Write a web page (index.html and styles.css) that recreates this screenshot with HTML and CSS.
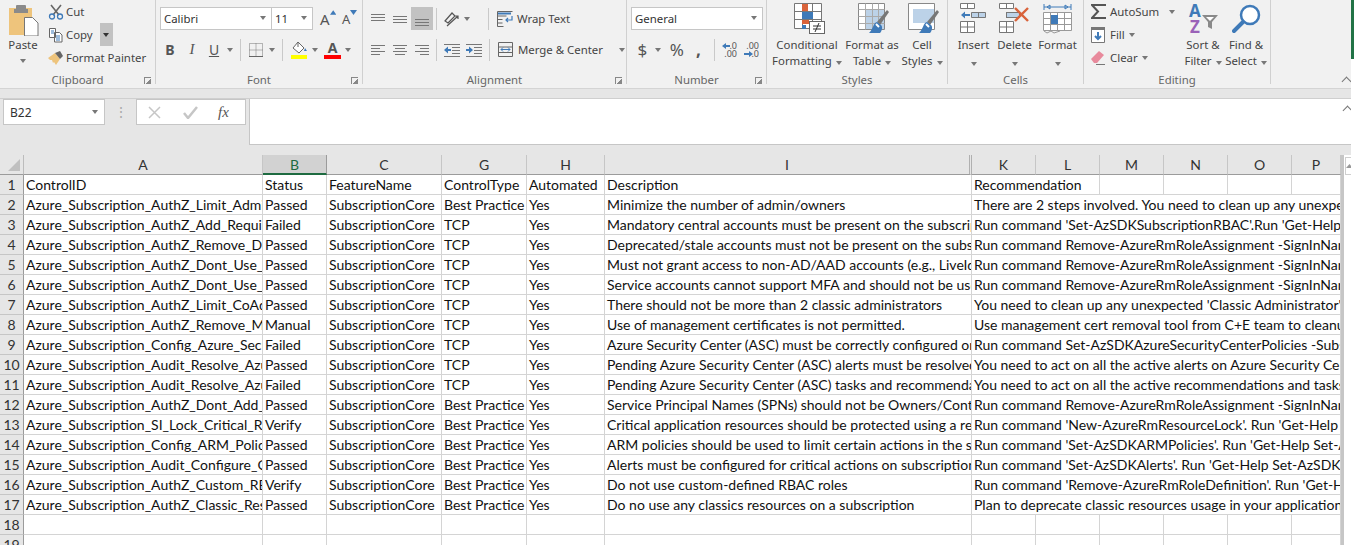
FILE: index.html
```html
<!DOCTYPE html>
<html lang="en">
<head>
<meta charset="utf-8">
<title>Excel</title>
<link rel="stylesheet" href="styles.css">
</head>
<body>
<div class="app">
  <div class="ribbon">
    <section class="group g-clip">
      <div class="gbody clip-body">
        <div class="paste">
          <svg width="32" height="32" viewBox="0 0 32 32"><rect x="1" y="4" width="23" height="27" fill="#eec47c"/><rect x="8" y="1" width="10" height="7" rx="1" fill="#8a8a8a"/><rect x="6" y="5" width="14" height="4" fill="#8a8a8a"/><path d="M16.500 13.500h8l5.500 5.500v13h-13.500z" fill="#fff" stroke="#777"/></svg>
          <span>Paste</span>
          <i class="caret"></i>
        </div>
        <div class="clip-list">
          <div class="item"><svg width="16" height="16" viewBox="0 0 16 16"><path d="M3 1l8 10M13 1l-8 10" stroke="#666" stroke-width="1.600" fill="none"/><circle cx="4" cy="12.500" r="2.500" fill="none" stroke="#3f7ab8" stroke-width="1.300"/><circle cx="12" cy="12.500" r="2.500" fill="none" stroke="#3f7ab8" stroke-width="1.300"/></svg><span>Cut</span></div>
          <div class="item"><svg width="16" height="16" viewBox="0 0 16 16"><path d="M1.500 1.500h6v9h-6zM6.500 5.500h5l2.500 2.500v7h-7.500z" fill="#fff" stroke="#666"/><path d="M3 4h3M3 6h3M8 9h4M8 11h4M8 13h4" stroke="#3f7ab8"/></svg><span>Copy</span><b class="split"><i class="caret dark"></i></b></div>
          <div class="item"><svg width="16" height="16" viewBox="0 0 16 16"><path d="M0 8l7-5 5 6-4 6-2-3-1 1-1-3-2 0z" fill="#eec47c"/><path d="M7 3l5 6 3-3-3-5z" fill="#666"/></svg><span>Format Painter</span></div>
        </div>
      </div>
      <footer class="glabel">Clipboard<i class="launch"></i></footer>
    </section>

    <section class="group g-font">
      <div class="gbody stack">
        <div class="line first">
          <div class="select font"><span>Calibri</span><i class="caret"></i></div>
          <div class="select size"><span>11</span><i class="caret"></i></div>
          <span class="grow">A<svg width="7" height="5" viewBox="0 0 7 5"><path d="M0 5l3.500-5 3.500 5z" fill="#3f7ab8"/></svg></span>
          <span class="grow small-a">A<svg width="7" height="5" viewBox="0 0 7 5"><path d="M0 0l3.500 5 3.500-5z" fill="#3f7ab8"/></svg></span>
        </div>
        <div class="line second fonttools">
          <b class="tb bold">B</b><i class="tb ital">I</i><u class="tb und">U</u><i class="caret"></i>
          <em class="sep"></em>
          <svg width="14" height="14" viewBox="0 0 14 14"><path d="M.5.500h13v13H.5zM7 .5v13M.5 7h13" fill="none" stroke="#777" stroke-dasharray="1 1"/><path d="M0 13.500h14" stroke="#666"/></svg>
          <i class="caret c-b"></i>
          <em class="sep"></em>
          <svg width="17" height="18" viewBox="0 0 17 18"><path d="M7 1l6 6-5 5-6-5z" fill="#fff" stroke="#666"/><path d="M7 1v5" stroke="#666"/><path d="M14 7l2 3-3 0z" fill="#3f7ab8"/><rect y="14" width="16" height="4" fill="#ff0"/></svg>
          <i class="caret c-f"></i>
          <span class="colora">A</span>
          <i class="caret c-f"></i>
        </div>
      </div>
      <footer class="glabel">Font<i class="launch"></i></footer>
    </section>

    <section class="group g-align">
      <div class="gbody stack">
        <div class="line first">
          <span class="ai"><svg width="14" height="14" viewBox="0 0 14 14"><path d="M0 2.500h14M0 5.500h14M0 8.500h14" stroke="#777"/></svg></span>
          <span class="ai"><svg width="14" height="14" viewBox="0 0 14 14"><path d="M0 4.500h14M0 7.500h14M0 10.500h14" stroke="#777"/></svg></span>
          <span class="ai on"><svg width="14" height="14" viewBox="0 0 14 14"><path d="M0 7.500h14M0 10.500h14M0 13.500h14" stroke="#777"/></svg></span>
          <em class="sep"></em>
          <svg class="orient" width="16" height="16" viewBox="0 0 16 16"><path d="M1 10L8 2l3 3-7 7zM3 15L14 5M11 5h3v3" fill="none" stroke="#555" stroke-width="1.200"/></svg>
          <i class="caret"></i>
          <em class="sep far"></em>
          <div class="item wide"><svg width="16" height="16" viewBox="0 0 16 16"><path d="M.5.500h15M.5 5h9M.5 8.500h5M.5 12h5M.5.500v15h6" fill="none" stroke="#666"/><path d="M1 2.500h13" stroke="#3f7ab8" stroke-width="2"/><path d="M15 5v4H9M11 7l-2 2 2 2" fill="none" stroke="#3f7ab8" stroke-width="1.200"/></svg><span>Wrap Text</span></div>
        </div>
        <div class="line second">
          <span class="ai"><svg width="14" height="14" viewBox="0 0 14 14"><path d="M0 2.500h14M0 5.500h9M0 8.500h14M0 11.500h9" stroke="#777"/></svg></span>
          <span class="ai"><svg width="14" height="14" viewBox="0 0 14 14"><path d="M0 2.500h14M2 5.500h10M0 8.500h14M2 11.500h10" stroke="#777"/></svg></span>
          <span class="ai"><svg width="14" height="14" viewBox="0 0 14 14"><path d="M0 2.500h14M5 5.500h9M0 8.500h14M5 11.500h9" stroke="#777"/></svg></span>
          <em class="sep"></em>
          <svg class="ind" width="16" height="14" viewBox="0 0 16 14"><path d="M0 1.500h16M8 4.500h8M8 7.500h8M8 10.500h8M0 13.500h16" stroke="#777"/><path d="M0 7l4-3.500V6h3v2H4v2.500z" fill="#3f7ab8"/></svg>
          <svg class="ind" width="16" height="14" viewBox="0 0 16 14"><path d="M0 1.500h16M8 4.500h8M8 7.500h8M8 10.500h8M0 13.500h16" stroke="#777"/><path d="M7 7L3 3.500V6H0v2h3v2.500z" fill="#3f7ab8"/></svg>
          <em class="sep far2"></em>
          <div class="item wide"><svg width="16" height="16" viewBox="0 0 16 16"><path d="M.5.500h14v14H.5zM.5 5h14M.5 10.500h14" fill="#f1f1f1" stroke="#666"/><path d="M3 7.500h9" stroke="#3f7ab8"/><path d="M5 5.500l-2 2 2 2M10 5.500l2 2-2 2" fill="none" stroke="#3f7ab8"/></svg><span>Merge &amp; Center</span><i class="caret push"></i></div>
        </div>
      </div>
      <footer class="glabel">Alignment<i class="launch"></i></footer>
    </section>

    <section class="group g-num">
      <div class="gbody stack">
        <div class="line first"><div class="select general"><span>General</span><i class="caret"></i></div></div>
        <div class="line second numtools">
          <span class="sym dollar">$</span><i class="caret"></i>
          <span class="sym pct">%</span><span class="sym comma">,</span>
          <em class="sep"></em>
          <span class="dec"><svg width="15" height="15" viewBox="0 0 15 15"><path d="M0 4l4-3v2h4v2H4v2z" fill="#3f7ab8"/></svg><small class="d1">.0</small><small class="d2">.00</small></span>
          <span class="dec"><svg width="15" height="15" viewBox="0 0 15 15"><path d="M9 12l-4-3v2H0v2h5v2z" fill="#3f7ab8"/></svg><small class="d3">.00</small><small class="d4">.0</small></span>
        </div>
      </div>
      <footer class="glabel">Number<i class="launch"></i></footer>
    </section>

    <section class="group g-styles">
      <div class="gbody bigs">
        <div class="lg cond">
          <svg width="31" height="31" viewBox="0 0 31 31"><path d="M.5.500h27v25H.5zM.5 8.500h27M.5 16.500h27M8.500.500v25M18.500.500v25" fill="#fff" stroke="#777"/><rect x="8" y="1" width="6" height="7" fill="#d9633b"/><rect x="8" y="9" width="11" height="7" fill="#3f7ab8"/><rect x="8" y="17" width="7" height="4" fill="#d9633b"/><rect x="8" y="22" width="4" height="4" fill="#3f7ab8"/><rect x="15.500" y="18.500" width="15" height="12" fill="#fff" stroke="#666"/><path d="M19 23h8M19 26h8M25 20l-4 9" stroke="#333"/></svg>
          <span>Conditional</span><span>Formatting<i class="caret"></i></span>
        </div>
        <div class="lg tbl">
          <svg width="31" height="31" viewBox="0 0 31 31"><path d="M.5.500h26v26H.5z" fill="#fff" stroke="#888"/><rect x="7" y="7" width="19" height="19" fill="#bcd2e8"/><path d="M.5 6.500h26M.5 13.500h26M.5 20.500h26M7.500.500v26M14.500.500v26M20.500.500v26" stroke="#aaa" fill="none"/><path d="M29 7l-10 12 3 3 9-13z" fill="#777"/><path d="M19 19c-4 1-3 6-8 11h11c2-2 3-6 1-8z" fill="#3f7ab8"/><path d="M18 21l3 3" stroke="#fff" stroke-width="2"/></svg>
          <span>Format as</span><span>Table<i class="caret"></i></span>
        </div>
        <div class="lg cst">
          <svg width="31" height="31" viewBox="0 0 31 31"><path d="M.5.500h26v26H.5z" fill="#fff" stroke="#888"/><rect x="5" y="6" width="21" height="14" fill="#bcd2e8"/><path d="M29 7l-10 12 3 3 9-13z" fill="#777"/><path d="M19 19c-4 1-3 6-8 11h11c2-2 3-6 1-8z" fill="#3f7ab8"/><path d="M18 21l3 3" stroke="#fff" stroke-width="2"/></svg>
          <span>Cell</span><span>Styles<i class="caret"></i></span>
        </div>
      </div>
      <footer class="glabel">Styles</footer>
    </section>

    <section class="group g-cells">
      <div class="gbody bigs">
        <div class="lg ins">
          <svg width="27" height="31" viewBox="0 0 27 31"><path d="M.5.500h14v5H.5zM7.500.500v5M.5 18.500h14v11H.5zM.5 24h14M7.500 18.500v11" fill="#fff" stroke="#777"/><path d="M11.500 9.500h14v5h-14zM18.500 9.500v5" fill="#bcd2e8" stroke="#777"/><path d="M1 12l4-3.500V11h5v2H5v2.500z" fill="#3f7ab8"/></svg>
          <span>Insert</span><i class="caret under"></i>
        </div>
        <div class="lg del">
          <svg width="31" height="31" viewBox="0 0 31 31"><path d="M.5.500h14v5H.5zM7.500.500v5M.5 18.500h14v11H.5zM.5 24h14M7.500 18.500v11" fill="#fff" stroke="#777"/><rect x="7.500" y="9.500" width="13" height="5" fill="#bcd2e8" stroke="#777"/><path d="M16 5l13 13M29 5L16 18" stroke="#d9633b" stroke-width="2.400"/></svg>
          <span>Delete</span><i class="caret under"></i>
        </div>
        <div class="lg fmt">
          <svg width="29" height="31" viewBox="0 0 29 31"><path d="M1 4h27M1 1v6M28 1v6M4 4l3-2v4zM25 4l-3-2v4z" fill="none" stroke="#3f7ab8"/><path d="M.5 9.500h28v18H.5zM.5 15.500h28M.5 21.500h28M7.500 9.500v18M14.500 9.500v18M21.500 9.500v18" fill="#fff" stroke="#999"/><rect x="8" y="12" width="7" height="9" fill="#3f7ab8"/><path d="M1 28l3 2 4-2 3 2 6-2" fill="none" stroke="#999"/></svg>
          <span>Format</span><i class="caret under"></i>
        </div>
      </div>
      <footer class="glabel">Cells</footer>
    </section>

    <section class="group g-edit">
      <div class="gbody edit-body">
        <div class="edit-list">
          <div class="item"><svg width="15" height="15" viewBox="0 0 15 15"><path d="M14 2V1H1l6 6.500L1 14h13v-1" fill="none" stroke="#555" stroke-width="2"/></svg><span>AutoSum</span><i class="caret as"></i></div>
          <div class="item"><svg width="15" height="16" viewBox="0 0 15 16"><path d="M.5.500h13v15H.5z" fill="#fff" stroke="#777"/><rect width="14" height="3" fill="#777"/><path d="M7 5v7M4 9l3 3 3-3" fill="none" stroke="#3f7ab8" stroke-width="2"/></svg><span>Fill</span><i class="caret"></i></div>
          <div class="item"><svg width="15" height="15" viewBox="0 0 15 15"><path d="M0 9l8-8 5 4-7 8H3z" fill="#e88a9c"/><path d="M5 14.500h9" stroke="#777"/></svg><span>Clear</span><i class="caret"></i></div>
        </div>
        <div class="lg sort">
          <svg width="31" height="31" viewBox="0 0 31 31"><text x="1" y="14" class="az a">A</text><text x="2" y="30" class="az z">Z</text><path d="M14 12h16l-6 7v7l-4-2v-5z" fill="#8a8a8a"/><path d="M18 14h8l-4 4z" fill="#fff"/></svg>
          <span>Sort &amp;</span><span>Filter<i class="caret"></i></span>
        </div>
        <div class="lg find">
          <svg width="29" height="31" viewBox="0 0 29 31"><circle cx="18" cy="12" r="9" fill="#fff" stroke="#3f7ab8" stroke-width="2.500"/><path d="M11 19L2 28" stroke="#3f7ab8" stroke-width="4" stroke-linecap="round"/></svg>
          <span>Find &amp;</span><span>Select<i class="caret"></i></span>
        </div>
      </div>
      <footer class="glabel">Editing</footer>
    </section>

    <div class="rib-end"><i class="chev"></i></div>
    <b class="green"></b>
  </div>

  <div class="gapbar"></div>

  <div class="fbar">
    <div class="namebox"><span>B22</span><i class="caret"></i></div>
    <div class="dots">⋮</div>
    <div class="fxbox">
      <svg width="13" height="13" viewBox="0 0 13 13"><path d="M1 1l11 11M12 1L1 12" stroke="#c6c6c6" stroke-width="1.500"/></svg>
      <svg width="15" height="13" viewBox="0 0 15 13"><path d="M1 7l4 5L14 1" fill="none" stroke="#c6c6c6" stroke-width="2.500"/></svg>
      <span class="fx">fx</span>
    </div>
    <div class="finput"><i class="chev"></i></div>
  </div>

  <div class="sheet">
    <div class="grid">
      <div class="corner"><i></i></div>
      <div class="ch">A</div><div class="ch act">B</div><div class="ch">C</div><div class="ch">G</div><div class="ch">H</div><div class="ch hid">I</div><div class="ch">K</div><div class="ch">L</div><div class="ch">M</div><div class="ch">N</div><div class="ch">O</div><div class="ch">P</div>

      <div class="rh">1</div><div class="c">ControlID</div><div class="c">Status</div><div class="c">FeatureName</div><div class="c">ControlType</div><div class="c">Automated</div><div class="c">Description</div><div class="c s2">Recommendation</div><div class="c"></div><div class="c"></div><div class="c"></div><div class="c"></div>

      <div class="rh">2</div><div class="c">Azure_Subscription_AuthZ_Limit_Admin_Owner_Count</div><div class="c">Passed</div><div class="c">SubscriptionCore</div><div class="c">Best Practice</div><div class="c">Yes</div><div class="c">Minimize the number of admin/owners</div><div class="c s6">There are 2 steps involved. You need to clean up any unexpected accounts</div>
      <div class="rh">3</div><div class="c">Azure_Subscription_AuthZ_Add_Required_Central_Accounts</div><div class="c">Failed</div><div class="c">SubscriptionCore</div><div class="c">TCP</div><div class="c">Yes</div><div class="c">Mandatory central accounts must be present on the subscription</div><div class="c s6">Run command 'Set-AzSDKSubscriptionRBAC'.Run 'Get-Help Set-AzSDKSubscriptionRBAC'</div>
      <div class="rh">4</div><div class="c">Azure_Subscription_AuthZ_Remove_Deprecated_Accounts</div><div class="c">Passed</div><div class="c">SubscriptionCore</div><div class="c">TCP</div><div class="c">Yes</div><div class="c">Deprecated/stale accounts must not be present on the subscription</div><div class="c s6">Run command Remove-AzureRmRoleAssignment -SignInName 'user'</div>
      <div class="rh">5</div><div class="c">Azure_Subscription_AuthZ_Dont_Use_NonAD_Identities</div><div class="c">Passed</div><div class="c">SubscriptionCore</div><div class="c">TCP</div><div class="c">Yes</div><div class="c">Must not grant access to non-AD/AAD accounts (e.g., LiveId)</div><div class="c s6">Run command Remove-AzureRmRoleAssignment -SignInName 'user'</div>
      <div class="rh">6</div><div class="c">Azure_Subscription_AuthZ_Dont_Use_SVC_Accounts</div><div class="c">Passed</div><div class="c">SubscriptionCore</div><div class="c">TCP</div><div class="c">Yes</div><div class="c">Service accounts cannot support MFA and should not be used</div><div class="c s6">Run command Remove-AzureRmRoleAssignment -SignInName 'user'</div>
      <div class="rh">7</div><div class="c">Azure_Subscription_AuthZ_Limit_CoAdmin_Count</div><div class="c">Passed</div><div class="c">SubscriptionCore</div><div class="c">TCP</div><div class="c">Yes</div><div class="c">There should not be more than 2 classic administrators</div><div class="c s6">You need to clean up any unexpected 'Classic Administrator' accounts</div>
      <div class="rh">8</div><div class="c">Azure_Subscription_AuthZ_Remove_Management_Certs</div><div class="c">Manual</div><div class="c">SubscriptionCore</div><div class="c">TCP</div><div class="c">Yes</div><div class="c">Use of management certificates is not permitted.</div><div class="c s6">Use management cert removal tool from C+E team to cleanup certificates</div>
      <div class="rh">9</div><div class="c">Azure_Subscription_Config_Azure_Security_Center</div><div class="c">Failed</div><div class="c">SubscriptionCore</div><div class="c">TCP</div><div class="c">Yes</div><div class="c">Azure Security Center (ASC) must be correctly configured on the subscription</div><div class="c s6">Run command Set-AzSDKAzureSecurityCenterPolicies -SubscriptionId</div>
      <div class="rh">10</div><div class="c">Azure_Subscription_Audit_Resolve_Azure_Alerts</div><div class="c">Passed</div><div class="c">SubscriptionCore</div><div class="c">TCP</div><div class="c">Yes</div><div class="c">Pending Azure Security Center (ASC) alerts must be resolved</div><div class="c s6">You need to act on all the active alerts on Azure Security Center</div>
      <div class="rh">11</div><div class="c">Azure_Subscription_Audit_Resolve_Azure_Tasks</div><div class="c">Failed</div><div class="c">SubscriptionCore</div><div class="c">TCP</div><div class="c">Yes</div><div class="c">Pending Azure Security Center (ASC) tasks and recommendations</div><div class="c s6">You need to act on all the active recommendations and tasks on Azure</div>
      <div class="rh">12</div><div class="c">Azure_Subscription_AuthZ_Dont_Add_SPNs_As_Owners</div><div class="c">Passed</div><div class="c">SubscriptionCore</div><div class="c">Best Practice</div><div class="c">Yes</div><div class="c">Service Principal Names (SPNs) should not be Owners/Contributors</div><div class="c s6">Run command Remove-AzureRmRoleAssignment -SignInName 'user'</div>
      <div class="rh">13</div><div class="c">Azure_Subscription_SI_Lock_Critical_Resources</div><div class="c">Verify</div><div class="c">SubscriptionCore</div><div class="c">Best Practice</div><div class="c">Yes</div><div class="c">Critical application resources should be protected using a resource lock</div><div class="c s6">Run command 'New-AzureRmResourceLock'. Run 'Get-Help New-AzureRmResourceLock'</div>
      <div class="rh">14</div><div class="c">Azure_Subscription_Config_ARM_Policies</div><div class="c">Passed</div><div class="c">SubscriptionCore</div><div class="c">Best Practice</div><div class="c">Yes</div><div class="c">ARM policies should be used to limit certain actions in the subscription</div><div class="c s6">Run command 'Set-AzSDKARMPolicies'. Run 'Get-Help Set-AzSDKARMPolicies'</div>
      <div class="rh">15</div><div class="c">Azure_Subscription_Audit_Configure_Critical_Alerts</div><div class="c">Passed</div><div class="c">SubscriptionCore</div><div class="c">Best Practice</div><div class="c">Yes</div><div class="c">Alerts must be configured for critical actions on subscription</div><div class="c s6">Run command 'Set-AzSDKAlerts'. Run 'Get-Help Set-AzSDKAlerts -Examples'</div>
      <div class="rh">16</div><div class="c">Azure_Subscription_AuthZ_Custom_RBAC_Roles</div><div class="c">Verify</div><div class="c">SubscriptionCore</div><div class="c">Best Practice</div><div class="c">Yes</div><div class="c">Do not use custom-defined RBAC roles</div><div class="c s6">Run command 'Remove-AzureRmRoleDefinition'. Run 'Get-Help Remove-AzureRm'</div>
      <div class="rh">17</div><div class="c">Azure_Subscription_AuthZ_Classic_Resources</div><div class="c">Passed</div><div class="c">SubscriptionCore</div><div class="c">Best Practice</div><div class="c">Yes</div><div class="c">Do no use any classics resources on a subscription</div><div class="c s6">Plan to deprecate classic resources usage in your application</div>

      <div class="rh">18</div><div class="c"></div><div class="c"></div><div class="c"></div><div class="c"></div><div class="c"></div><div class="c"></div><div class="c"></div><div class="c"></div><div class="c"></div><div class="c"></div><div class="c"></div><div class="c"></div>
      <div class="rh">19</div><div class="c"></div><div class="c"></div><div class="c"></div><div class="c"></div><div class="c"></div><div class="c"></div><div class="c"></div><div class="c"></div><div class="c"></div><div class="c"></div><div class="c"></div><div class="c"></div>
    </div>
    <div class="vscroll"><div class="sb-up"><svg width="7" height="4" viewBox="0 0 7 4"><path d="M0 4l3.500-4L7 4z" fill="#999"/></svg></div><div class="sb-track"></div></div>
  </div>
</div>
</body>
</html>
```
FILE: styles.css
```css
* { box-sizing: border-box; }
html, body { margin: 0; padding: 0; }
body { width: 1358px; height: 546px; overflow: hidden; background: #fff; font-family: "Noto Sans", "Open Sans", sans-serif; font-size: 11.4px; color: #444; }
.app { display: flex; flex-direction: column; width: 1351px; height: 545px; overflow: hidden; }
i, em { font-style: normal; }

.caret { display: inline-block; width: 0; height: 0; border-left: 3.500px solid transparent; border-right: 3.500px solid transparent; border-top: 4px solid #777; flex: none; }
.caret.dark { border-top-color: #333; }

/* ribbon */
.ribbon { display: flex; height: 89px; background: #f1f1f1; border-bottom: 1px solid #d4d4d4; flex: none; }
.group { position: relative; display: flex; flex-direction: column; height: 84px; border-right: 1px solid #d0d0d0; flex: none; }
.gbody { flex: 1; min-height: 0; }
.glabel { height: 12px; line-height: 16px; text-align: center; color: #666; position: relative; }
.launch { position: absolute; right: 4px; bottom: 0; width: 7px; height: 7px; border-left: 1px solid #888; border-top: 1px solid #888; background: linear-gradient(135deg, transparent 55%, #888 55%); }
.g-clip { width: 156px; }
.g-font { width: 207px; }
.g-align { width: 264px; }
.g-num { width: 140px; }
.g-styles { width: 181px; }
.g-cells { width: 136px; }
.g-edit { width: 187px; }
.rib-end { flex: 1; position: relative; }
.green { position: fixed; left: 1351px; top: 0; width: 3px; height: 59px; background: #217346; }
.chev { position: absolute; width: 7px; height: 7px; border-left: 1.500px solid #777; border-top: 1.500px solid #777; transform: rotate(45deg); right: 1px; top: 78px; }

.item { display: flex; align-items: center; gap: 4px; height: 23px; white-space: nowrap; }
.item svg { flex: none; }
.item span { padding-bottom: 1px; }

.clip-body { display: flex; }
.paste { width: 46px; padding-top: 4px; display: flex; flex-direction: column; align-items: center; }
.paste svg { margin-left: 1px; }
.paste span { line-height: 17px; }
.paste .caret { margin-top: 6px; }
.clip-list { padding-left: 2px; }
.clip-list .item { gap: 2px; }
.split { display: flex; align-items: center; justify-content: center; width: 13px; height: 23px; background: #c2c2c2; margin-left: 5px; }

.stack { display: flex; flex-direction: column; }
.line { display: flex; align-items: center; height: 23px; }
.line.first { margin-top: 7px; }
.line.second { margin-top: 8px; }

.select { display: flex; align-items: center; justify-content: space-between; height: 23px; background: #fff; border: 1px solid #c6c6c6; padding: 0 5px 1px 3px; color: #333; }
.g-font .line { padding-left: 4px; }
.font { width: 112px; }
.size { width: 42px; margin-left: -1px; }
.grow { display: inline-flex; align-items: flex-start; font-size: 15px; line-height: 18px; margin-left: 7px; width: 16px; color: #555; }
.small-a { font-size: 13px; margin-left: 6px; }
.fonttools .tb { width: 22px; text-align: center; font-size: 14px; color: #555; flex: none; }
.fonttools .bold { margin-left: -1px; }
.fonttools .ital { font-family: "Liberation Serif", serif; font-style: italic; font-size: 15px; }
.fonttools .caret { margin-left: 2px; }
.fonttools .caret.c-b { margin-left: 6px; }
.fonttools .caret.c-f { margin-left: 4px; }
.sep { display: block; width: 1px; height: 22px; background: #c9c9c9; margin: 0 7px; flex: none; }
.fonttools .sep { margin-right: 8px; }
.colora { width: 17px; margin-left: 6px; text-align: center; font-weight: 700; font-size: 14px; line-height: 15px; color: #555; border-bottom: 4px solid #f00; }

.g-align .line { padding-left: 4px; }
.ai { display: flex; align-items: center; justify-content: center; width: 22px; height: 23px; flex: none; }
.ai.on { background: #c2c2c2; }
.g-align .caret { margin-left: 4px; }
.g-align .sep { margin: 0 7px 0 3px; }
.g-align .sep.far { margin: 0 8px 0 18px; }
.g-align .sep.far2 { margin: 0 8px 0 1px; }
.ind { margin-right: 6px; flex: none; }
.wide { width: 127px; gap: 4px; }
.g-align .push { margin-left: 12px; }

.g-num .line { padding-left: 4px; }
.general { width: 132px; }
.sym { display: block; text-align: center; font-size: 17px; color: #555; line-height: 22px; }
.dollar { width: 14px; margin-left: 6px; }
.numtools .caret { margin-left: 7px; }
.pct { width: 20px; margin-left: 8px; }
.comma { width: 12px; margin-left: 9px; font-weight: 700; line-height: 14px; }
.numtools .sep { margin: 0 7px 0 11px; }
.dec { position: relative; display: block; width: 15px; height: 15px; margin-right: 7px; flex: none; }
.dec small { position: absolute; font-size: 9px; line-height: 8px; color: #555; }
.d1 { right: 0; top: 0; }
.d2 { right: 0; top: 8px; }
.d3 { right: 0; top: 0; }
.d4 { right: 0; top: 8px; }

.bigs { display: flex; padding-top: 3px; }
.lg { display: flex; flex-direction: column; align-items: center; flex: none; line-height: 16px; white-space: nowrap; }
.lg svg { height: 31px; margin-bottom: 3px; flex: none; }
.lg .caret { margin-left: 4px; }
.lg .caret.under { margin: 9px 0 0; }
.cond { width: 80px; }
.cond svg { margin-left: 4px; }
.tbl { width: 50px; }
.cst { width: 50px; }
.cst svg, .tbl svg { margin-left: 3px; }
.ins { width: 41px; margin-left: 5px; }
.del { width: 41px; }
.fmt { width: 45px; }

.edit-body { display: flex; }
.edit-list { width: 96px; padding-left: 7px; }
.edit-list .caret { margin-left: 0; }
.edit-list .as { margin-left: 6px; }
.edit-body .lg { padding-top: 3px; }
.sort { width: 46px; }
.find { width: 40px; }
.az { font-size: 17px; font-weight: 700; font-family: "Noto Sans", sans-serif; }
.az.a { fill: #3f7ab8; }
.az.z { fill: #9a62b8; }

.gapbar { height: 10px; background: #e6e6e6; border-bottom: 1px solid #cfcfcf; flex: none; }

/* formula bar */
.fbar { display: flex; height: 56px; background: #e6e6e6; flex: none; }
.namebox { display: flex; align-items: center; justify-content: space-between; width: 102px; height: 26px; margin-left: 3px; background: #fff; border: 1px solid #c6c6c6; padding: 0 6px; color: #333; font-size: 12px; }
.dots { width: 31px; text-align: center; color: #aaa; line-height: 25px; font-size: 14px; }
.fxbox { display: flex; align-items: center; width: 110px; height: 26px; background: #fff; border: 1px solid #c6c6c6; padding-left: 11px; gap: 22px; }
.fx { font-family: "Liberation Serif", serif; font-style: italic; font-size: 15px; color: #555; line-height: 15px; margin-left: -2px; }
.finput { position: relative; flex: 1; height: 46px; margin-left: 3px; background: #fff; border-left: 1px solid #c6c6c6; border-bottom: 1px solid #c6c6c6; }
.finput .chev { top: 8px; right: 0; }

/* sheet */
.sheet { display: flex; flex: 1; min-height: 0; background: #e6e6e6; overflow: hidden; }
.grid { display: grid; grid-template-columns: 24px 239px 64px 115px 85px 78px 367px 64px 64px 64px 64px 64px 49px; grid-auto-rows: 20px; width: 1341px; flex: none; background: #fff; align-content: start; font-family: Lato, "Noto Sans", sans-serif; font-size: 14px; color: #111; }
.corner { position: relative; background: #e6e6e6; border-right: 1px solid #bcbcbc; border-bottom: 1px solid #9b9b9b; }
.corner i { position: absolute; right: 3px; bottom: 3px; width: 0; height: 0; border-left: 12px solid transparent; border-bottom: 12px solid #c0c0c0; }
.ch { background: #e6e6e6; border-right: 1px solid #c6c6c6; border-bottom: 1px solid #9b9b9b; text-align: center; line-height: 19px; color: #333; }
.ch.act { background: #d2d2d2; color: #1e6b41; border-bottom: 2px solid #1e6b41; border-right-color: #9b9b9b; }
.ch.hid { border-right: 3px double #b0b0b0; }
.rh { background: #e6e6e6; border-right: 1px solid #9b9b9b; border-bottom: 1px solid #c6c6c6; text-align: center; line-height: 19px; color: #333; }
.c { border-right: 1px solid #d4d4d4; border-bottom: 1px solid #d4d4d4; padding-left: 2px; line-height: 19px; white-space: nowrap; overflow: hidden; }
.s2 { grid-column: span 2; }
.s6 { grid-column: span 6; }
.vscroll { flex: 1; display: flex; flex-direction: column; padding-top: 2px; border-left: 3px solid #c6c6c6; padding-left: 1px; background: #fff; }
.sb-up { display: flex; align-items: center; justify-content: center; height: 18px; background: #fff; border: 1px solid #cfcfcf; border-right: 0; flex: none; }
.sb-track { flex: 1; background: #fff; }
```
